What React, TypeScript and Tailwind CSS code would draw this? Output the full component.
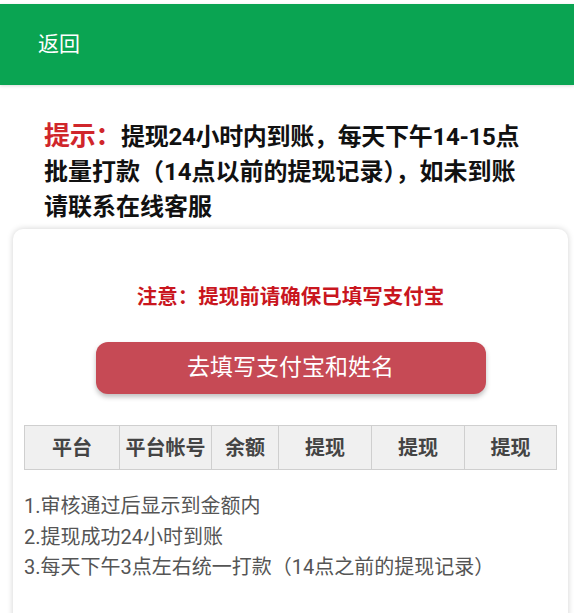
import React from "react";

const font = { fontFamily: '"Roboto", "Noto Sans CJK SC", sans-serif' };

export default function App() {
  const cols = [
    { label: "平台", w: "w-[94px]" },
    { label: "平台帐号", w: "w-[92px]" },
    { label: "余额", w: "w-[67px]" },
    { label: "提现", w: "w-[93px]" },
    { label: "提现", w: "w-[93px]" },
    { label: "提现", w: "flex-1" },
  ];
  return (
    <div className="w-[574px] h-[613px] bg-white overflow-hidden" style={font}>
      <div className="pt-[4px]">
        <div className="h-[81px] bg-[#0aa452] flex items-center pl-[38px] shadow-[0_1px_3px_rgba(0,0,0,0.15)]">
          <span className="text-white text-[21px] leading-none">返回</span>
        </div>
      </div>

      <div className="pl-[44px] pt-[34px] text-[24px] leading-[35px] font-bold text-[#111] whitespace-nowrap">
        <div className="tracking-[-0.3px]">
          <span className="text-[#d0262b] text-[26px]">提示：</span>提现24小时内到账，每天下午14-15点
        </div>
        <div>批量打款（14点以前的提现记录），如未到账</div>
        <div>请联系在线客服</div>
      </div>

      <div className="mt-[4px] ml-[13px] mr-[6px] h-[400px] bg-white rounded-t-[10px] shadow-[0_0_6px_rgba(0,0,0,0.18)] px-[11px] pt-[54px]">
        <div className="text-center text-[20.5px] leading-[28px] font-bold text-[#c9161e]">
          注意：提现前请确保已填写支付宝
        </div>
        <div className="flex justify-center mt-[31px]">
          <div className="w-[390px] h-[52px] rounded-[12px] bg-[#c64a55] shadow-[0_3px_5px_rgba(0,0,0,0.25)] flex items-center justify-center text-white text-[23px]">
            去填写支付宝和姓名
          </div>
        </div>
        <div className="mt-[31px] flex h-[45px] border border-[#cfcfcf] bg-[#f0f0f0]">
          {cols.map((c, i) => (
            <div
              key={i}
              className={`${c.w} flex items-center justify-center text-[20px] font-bold text-[#444] ${i > 0 ? "border-l border-[#cfcfcf]" : ""}`}
            >
              {c.label}
            </div>
          ))}
        </div>
        <div className="mt-[21px] text-[20px] leading-[30.5px] text-[#555]">
          <div>1.审核通过后显示到金额内</div>
          <div>2.提现成功24小时到账</div>
          <div>3.每天下午3点左右统一打款（14点之前的提现记录）</div>
        </div>
      </div>
    </div>
  );
}
